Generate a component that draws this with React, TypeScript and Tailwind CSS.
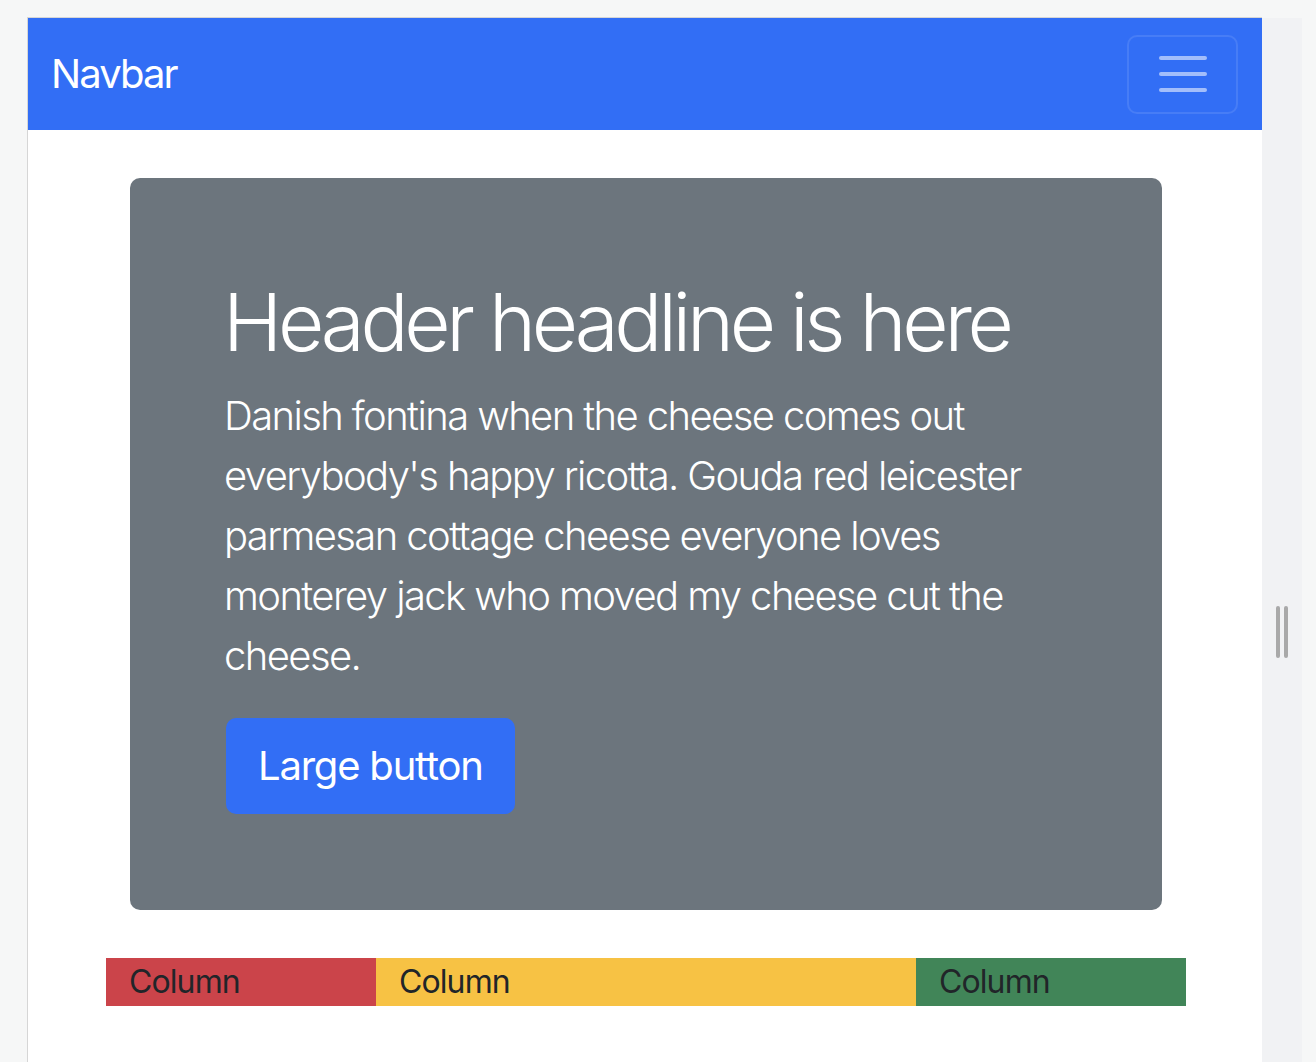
import React from "react";

export default function App() {
  const font = { fontFamily: "Inter, 'Noto Sans', sans-serif" };
  return (
    <div className="w-[1316px] h-[1062px] overflow-hidden bg-[#f6f7f7] flex pt-[17px] pl-[27px]" style={font}>
      <div className="w-[1235px] h-[1045px] shrink-0 bg-white border-l border-t border-[#d6d6d6] flex flex-col">
        <nav className="h-[112px] shrink-0 bg-[#326ef5] flex items-center justify-between pl-[23px] pr-[24px]">
          <span className="text-[40px] leading-[60px] text-white tracking-[-1.9px]">Navbar</span>
          <button className="w-[111px] h-[79px] rounded-[10px] border-2 border-white/10 flex flex-col items-center justify-center gap-[12px]">
            <span className="block w-[48px] h-[4px] rounded-full bg-white/55" />
            <span className="block w-[48px] h-[4px] rounded-full bg-white/55" />
            <span className="block w-[48px] h-[4px] rounded-full bg-white/55" />
          </button>
        </nav>
        <div className="w-[1080px] shrink-0 ml-[78px] pl-[24px] pr-[24px] mt-[48px]">
          <div className="bg-[#6c757d] rounded-[10px] p-[96px] pb-[96px]">
            <h1 className="text-[80px] leading-[96px] font-light text-white mb-[16px] tracking-[-4.3px] whitespace-nowrap -ml-[3px]">
              Header headline is here
            </h1>
            <p className="text-[40px] leading-[60px] font-light text-white mb-[32px] tracking-[-1.6px] -ml-[2px]">
              Danish fontina when the cheese comes out everybody's happy ricotta. Gouda red leicester parmesan cottage cheese everyone loves monterey jack who moved my cheese cut the cheese.
            </p>
            <button className="h-[96px] px-[32px] rounded-[10px] bg-[#326ef5] text-white text-[40px] leading-[60px] tracking-[-1.2px]">
              Large button
            </button>
          </div>
        </div>
        <div className="w-[1080px] shrink-0 ml-[78px] mt-[48px] flex">
          <div className="w-[270px] h-[48px] bg-[#cb444a] pl-[23px] text-[32px] leading-[48px] text-[#212529] tracking-[-0.9px]">Column</div>
          <div className="w-[540px] h-[48px] bg-[#f7c244] pl-[23px] text-[32px] leading-[48px] text-[#212529] tracking-[-0.9px]">Column</div>
          <div className="w-[270px] h-[48px] bg-[#418558] pl-[23px] text-[32px] leading-[48px] text-[#212529] tracking-[-0.9px]">Column</div>
        </div>
      </div>
      <div className="w-[40px] h-[1045px] shrink-0 mt-[1px] bg-[#f1f2f4] flex justify-center pt-[588px]">
        <div className="flex gap-[4px] h-[52px]">
          <span className="block w-[4px] h-[52px] rounded-full bg-[#a9a9a9]" />
          <span className="block w-[4px] h-[52px] rounded-full bg-[#a9a9a9]" />
        </div>
      </div>
    </div>
  );
}
